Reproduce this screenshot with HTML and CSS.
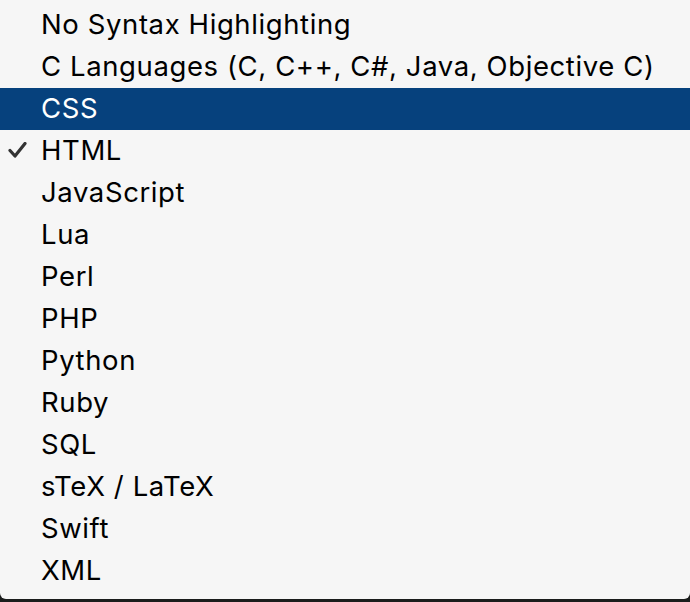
FILE: index.html
```html
<!DOCTYPE html>
<html lang="en">
<head>
  <meta charset="UTF-8" />
  <title>Syntax Menu</title>
  <link rel="stylesheet" href="styles.css">
</head>
<body>
  <ul class="menu">
    <li class="item">No Syntax Highlighting</li>
    <li class="item">C Languages (C, C++, C#, Java, Objective C)</li>
    <li class="item selected">CSS</li>
    <li class="item checked">
      <svg class="check" width="20" height="20" viewBox="0 0 20 20">
        <path d="M2 8.5 L7 14 L17 1.5" fill="none" stroke="#333" stroke-width="3.2" stroke-linecap="round" stroke-linejoin="round"/>
      </svg>
      HTML
    </li>
    <li class="item">JavaScript</li>
    <li class="item">Lua</li>
    <li class="item">Perl</li>
    <li class="item">PHP</li>
    <li class="item">Python</li>
    <li class="item">Ruby</li>
    <li class="item">SQL</li>
    <li class="item">sTeX / LaTeX</li>
    <li class="item">Swift</li>
    <li class="item">XML</li>
  </ul>
</body>
</html>
```

FILE: styles.css
```css
html, body {
  margin: 0;
  padding: 0;
  background: #1a1c1b;
  height: 602px;
  overflow: hidden;
}

.menu {
  list-style: none;
  margin: 0;
  padding: 4px 0 7px;
  width: 690px;
  height: 588px;
  background: #f6f6f6;
  border-radius: 0 0 6px 6px;
  font-family: Inter, "Noto Sans", sans-serif;
  font-size: 27.5px;
  letter-spacing: 0.6px;
  color: #000;
}

.item {
  position: relative;
  height: 42px;
  line-height: 40px;
  padding-left: 41px;
  white-space: nowrap;
}

.item.selected {
  background: #06417d;
  color: #fff;
}

.check {
  position: absolute;
  left: 8px;
  top: 12px;
}
```
